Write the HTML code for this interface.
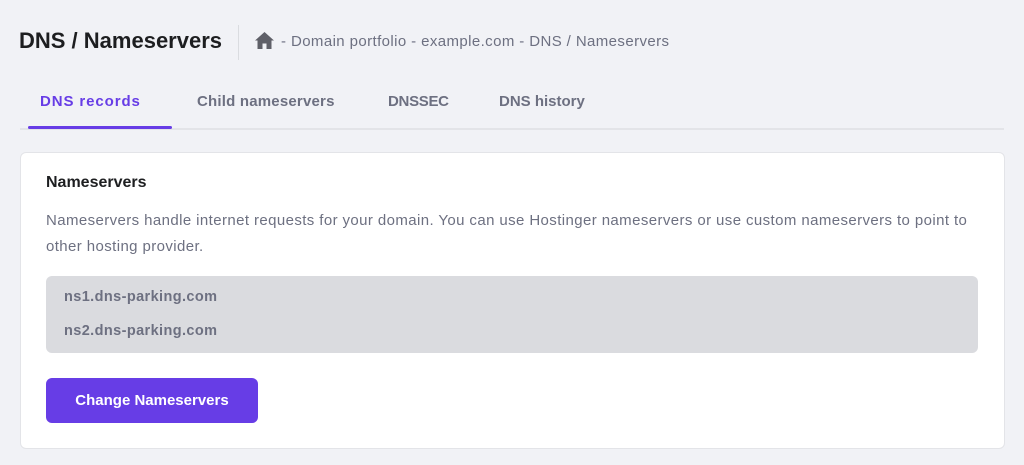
<!DOCTYPE html><html><head><style>
body{margin:0;width:1024px;height:465px;background:#f1f2f6;font-family:"Liberation Sans",sans-serif;position:relative;overflow:hidden}
.a{position:absolute;white-space:nowrap}
</style></head><body>
<div class="a" style="left:19px;top:28px;font-size:22px;font-weight:bold;color:#1d1e20">DNS / Nameservers</div>
<div class="a" style="left:238px;top:25px;width:1px;height:35px;background:#dadce0"></div>
<svg class="a" style="left:255px;top:32px" width="19" height="17" viewBox="0 0 19 17"><path d="M9.5 0L0 8.5h2.5V17h5v-5.5h4V17h5V8.5H19z" fill="#5f6068"/></svg>
<div class="a" style="left:281px;top:33px;font-size:15px;color:#6d7081;letter-spacing:0.4px">- Domain portfolio - example.com - DNS / Nameservers</div>
<div class="a" style="left:20px;top:128px;width:984px;height:2px;background:#e3e4e8"></div>
<div class="a" style="left:28px;top:126px;width:144px;height:3px;background:#673de6;border-radius:2px"></div>
<div class="a" style="left:40px;top:93px;font-size:15px;font-weight:bold;color:#673de6;letter-spacing:0.9px">DNS records</div>
<div class="a" style="left:197px;top:93px;font-size:15px;font-weight:bold;color:#6d7081;letter-spacing:0.2px">Child nameservers</div>
<div class="a" style="left:388px;top:93px;font-size:15px;font-weight:bold;color:#6d7081;letter-spacing:-0.3px">DNSSEC</div>
<div class="a" style="left:499px;top:93px;font-size:15px;font-weight:bold;color:#6d7081">DNS history</div>
<div class="a" style="left:20px;top:152px;width:983px;height:295px;background:#fff;border:1px solid #e3e4e8;border-radius:6px"></div>
<div class="a" style="left:46px;top:174px;font-size:16px;font-weight:bold;color:#1d1e20">Nameservers</div>
<div class="a" style="left:46px;top:208px;font-size:15px;color:#6d7081;line-height:26px;white-space:normal;width:945px;letter-spacing:0.4px">Nameservers handle internet requests for your domain. You can use Hostinger nameservers or use custom nameservers to point to other hosting provider.</div>
<div class="a" style="left:46px;top:276px;width:932px;height:77px;background:#dadbdf;border-radius:6px"></div>
<div class="a" style="left:64px;top:289px;font-size:14.5px;font-weight:bold;color:#6d7081;letter-spacing:0.4px">ns1.dns-parking.com</div>
<div class="a" style="left:64px;top:323px;font-size:14.5px;font-weight:bold;color:#6d7081;letter-spacing:0.4px">ns2.dns-parking.com</div>
<div class="a" style="left:46px;top:378px;width:212px;height:45px;background:#673de6;border-radius:6px;color:#fff;font-size:15px;font-weight:bold;text-align:center;line-height:45px">Change Nameservers</div>
</body></html>
